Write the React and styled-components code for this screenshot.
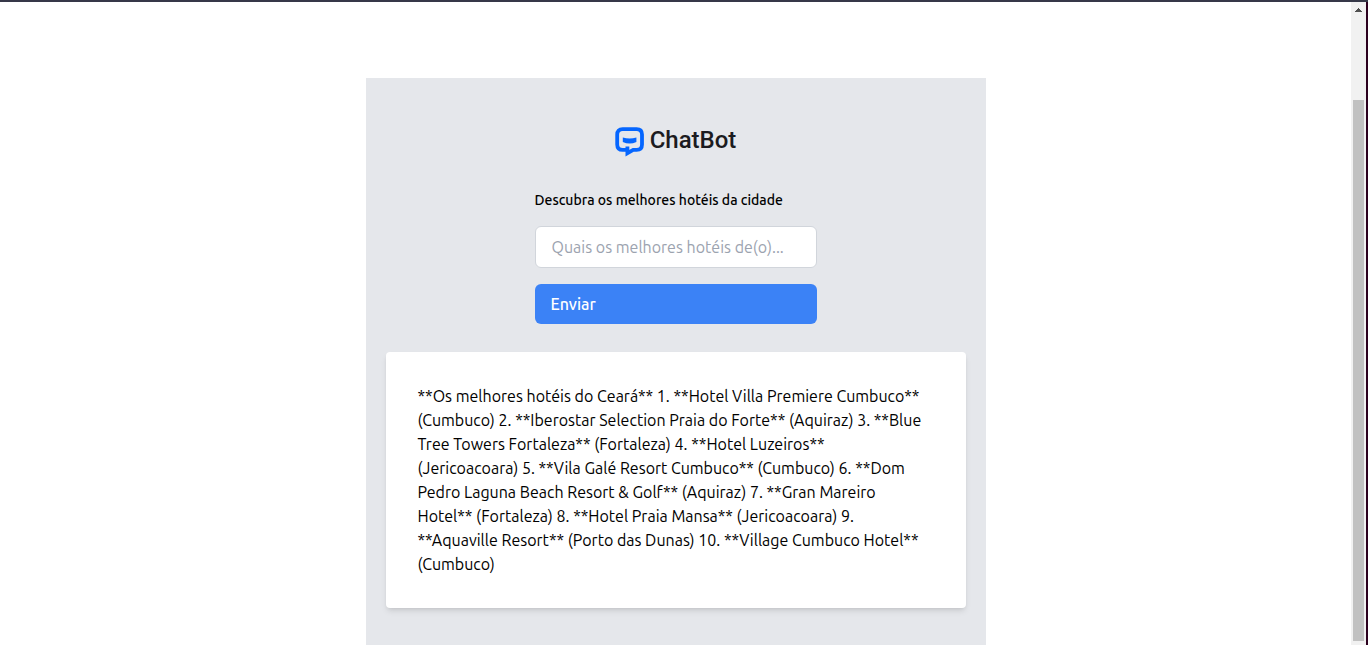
import React from "react";
import styled, { createGlobalStyle } from "styled-components";

const GlobalStyle = createGlobalStyle`
  *, *::before, *::after { box-sizing: border-box; }
  body {
    margin: 0;
    background: #fff;
    color: #000;
    font-family: Ubuntu, "Noto Sans", sans-serif;
  }
`;

const Window = styled.div`
  display: flex;
  height: 100vh;
  overflow: hidden;
  border-top: 2px solid #363848;
`;

const Page = styled.main`
  flex: 1;
  min-width: 0;
  display: flex;
  justify-content: center;
  padding-top: 76px;
`;

const Panel = styled.section`
  width: 100%;
  max-width: 620px;
  display: flex;
  flex-direction: column;
  align-items: center;
  align-self: stretch;
  padding: 48px 20px 0;
  background: #e5e7eb;
`;

const Brand = styled.h1`
  display: flex;
  align-items: flex-start;
  gap: 5px;
  height: 32px;
  margin: 0 0 32px;
  color: #1b1b20;
  font: 500 24px/28px Roboto, sans-serif;
`;

const Form = styled.form`
  display: flex;
  flex-direction: column;
  gap: 16px;
  width: 100%;
  max-width: 282px;
  margin-bottom: 28px;
`;

const Field = styled.div`
  display: flex;
  flex-direction: column;
  gap: 16px;
`;

const Label = styled.label`
  font-size: 14px;
  font-weight: 500;
  line-height: 20px;
`;

const TextInput = styled.input`
  width: 100%;
  height: 42px;
  padding: 8px 16px;
  border: 1px solid #d1d5db;
  border-radius: 6px;
  background: #fff;
  color: #000;
  font: 400 16px/24px Ubuntu, "Noto Sans", sans-serif;

  &::placeholder { color: #9ca3af; opacity: 1; }
`;

const SubmitButton = styled.button`
  height: 40px;
  padding: 8px 16px;
  border: 0;
  border-radius: 6px;
  background: #3b82f6;
  color: #fff;
  font: 500 16px/24px Ubuntu, "Noto Sans", sans-serif;
  text-align: left;
`;

const Answer = styled.article`
  width: 100%;
  padding: 32px;
  border-radius: 4px;
  background: #fff;
  box-shadow: 0 4px 6px -1px rgba(0, 0, 0, 0.1), 0 2px 4px -2px rgba(0, 0, 0, 0.1);
`;

const AnswerText = styled.p`
  margin: 0;
  font-size: 16px;
  line-height: 24px;
`;

const Line = styled.span`
  display: block;
`;

const ScrollTrack = styled.div`
  display: flex;
  flex-direction: column;
  align-items: center;
  width: 17px;
  padding: 6px 2px 4px;
  border-right: 2px solid #2c001e;
  background: #f1f1f1;
`;

const ScrollThumb = styled.div`
  flex: 1;
  width: 11px;
  margin-top: 87px;
  background: #c1c1c1;
`;

const lines = [
  "**Os melhores hotéis do Ceará** 1. **Hotel Villa Premiere Cumbuco**",
  "(Cumbuco) 2. **Iberostar Selection Praia do Forte** (Aquiraz) 3. **Blue",
  "Tree Towers Fortaleza** (Fortaleza) 4. **Hotel Luzeiros**",
  "(Jericoacoara) 5. **Vila Galé Resort Cumbuco** (Cumbuco) 6. **Dom",
  "Pedro Laguna Beach Resort & Golf** (Aquiraz) 7. **Gran Mareiro",
  "Hotel** (Fortaleza) 8. **Hotel Praia Mansa** (Jericoacoara) 9.",
  "**Aquaville Resort** (Porto das Dunas) 10. **Village Cumbuco Hotel**",
  "(Cumbuco)",
];

function LogoMark() {
  return (
    <svg width="30" height="32" viewBox="0 -1 30 32" aria-hidden="true">
      <path
        d="M12.4 22.9H7.6Q2.2 22.9 2.2 17.5V7.6Q2.2 2.2 7.6 2.2H21.6Q27 2.2 27 7.6V17.5Q27 22.9 21.6 22.9H18.2L12.4 26.2V19.4"
        fill="none"
        stroke="#0566ff"
        strokeWidth="3.8"
      />
      <path d="M7.8 10.6Q14.6 12.4 21.4 10.6V15Q14.6 18.2 7.8 15Z" fill="#0566ff" />
    </svg>
  );
}

export default function App() {
  return (
    <>
      <GlobalStyle />
      <Window>
        <Page>
          <Panel>
            <Brand>
              <LogoMark />
              ChatBot
            </Brand>
            <Form onSubmit={(event) => event.preventDefault()}>
              <Field>
                <Label htmlFor="city">Descubra os melhores hotéis da cidade</Label>
                <TextInput id="city" type="text" placeholder="Quais os melhores hotéis de(o)..." />
              </Field>
              <SubmitButton type="submit">Enviar</SubmitButton>
            </Form>
            <Answer>
              <AnswerText>
                {lines.map((line) => (
                  <Line key={line}>{line} </Line>
                ))}
              </AnswerText>
            </Answer>
          </Panel>
        </Page>
        <ScrollTrack aria-hidden="true">
          <svg width="7" height="5" viewBox="0 0 7 5">
            <path d="M3 0h1v1h1v1h1v1h1v1H0V3h1V2h1V1h1z" fill="#505050" />
          </svg>
          <ScrollThumb />
        </ScrollTrack>
      </Window>
    </>
  );
}
